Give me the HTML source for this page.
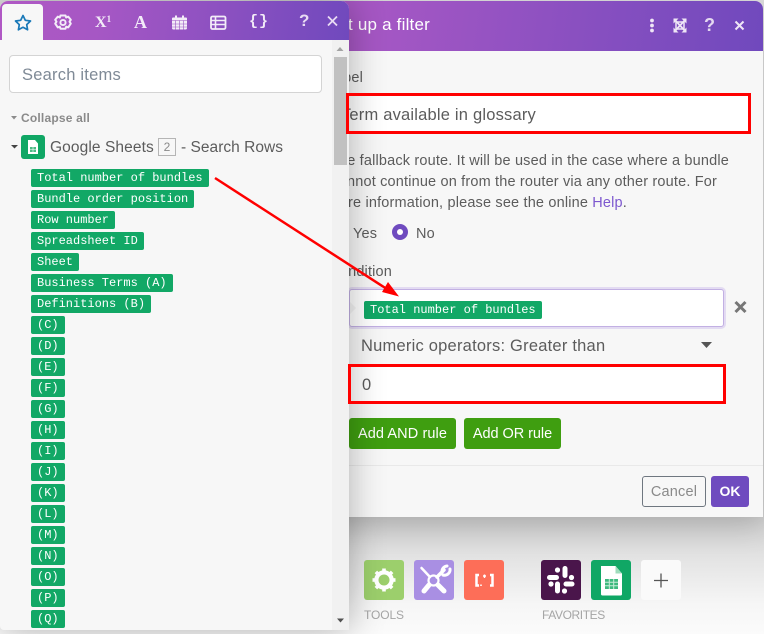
<!DOCTYPE html>
<html><head><meta charset="utf-8">
<style>
html,body{margin:0;padding:0;width:764px;height:634px;overflow:hidden}
body{position:relative;font-family:"Liberation Sans",sans-serif;color:#5c5c5c;background:linear-gradient(180deg,#ddd 0,#d0d0d0 517px,#e4e4e4 560px,#f6f6f6 605px,#fbfbfb 634px)}
.a{position:absolute;white-space:nowrap}
#dlg{left:250px;top:1px;width:513px;height:516px;background:#f7f7f7;border-radius:8px 8px 0 0;box-shadow:0 8px 30px rgba(0,0,0,.18);overflow:hidden}
#dh{left:0;top:0;width:513px;height:50px;background:linear-gradient(98deg,#b058c4 0,#a557c4 25%,#7049bd 100%)}
#panel{left:0;top:1px;width:349px;height:629px;background:#f7f7f7;border-radius:8px 8px 4px 4px;box-shadow:0 0 36px rgba(0,0,0,.3);overflow:hidden}
#ph{left:0;top:0;width:349px;height:39px;background:linear-gradient(98deg,#b058c4 0,#a557c4 30%,#7049bd 100%)}
#tab{left:2px;top:3px;width:41px;height:36px;background:#f7f7f7;border-radius:4px 4px 0 0}
.chip{position:absolute;left:31px;height:18px;padding:0 6px;background:#12a866;color:#fff;border-radius:2px;font:12px/19px "Liberation Mono",monospace;white-space:pre}
.inp{position:absolute;background:#fff;box-sizing:border-box}
.btn{position:absolute;box-sizing:border-box;text-align:center;border-radius:3px;font-size:14.5px;line-height:32px;height:31px;top:418px;background:#3f9e10;color:#fff}
svg{position:absolute;overflow:visible}
</style></head><body>

<!-- bottom toolbar -->
<div class="a" style="left:364px;top:560px;width:40px;height:40px;background:#9ccf6c;border-radius:3px"></div>
<div class="a" style="left:414px;top:560px;width:40px;height:40px;background:#a98fe3;border-radius:3px"></div>
<div class="a" style="left:464px;top:560px;width:40px;height:40px;background:#fd6e58;border-radius:3px"></div>
<div class="a" style="left:541px;top:560px;width:40px;height:40px;background:#4a154b;border-radius:3px"></div>
<div class="a" style="left:591px;top:560px;width:40px;height:40px;background:#10a765;border-radius:3px"></div>
<div class="a" style="left:641px;top:560px;width:40px;height:40px;background:#fafafa;border-radius:3px"></div>

<svg style="left:0;top:0" width="764" height="634" viewBox="0 0 764 634">
 <!-- gear -->
 <g transform="translate(384,580)" fill="#fff">
  <circle r="7.5" fill="none" stroke="#fff" stroke-width="4.5"/>
  <rect x="-1.800" y="-11.500" width="3.600" height="23"/><rect x="-1.800" y="-11.500" width="3.600" height="23" transform="rotate(45)"/><rect x="-1.800" y="-11.500" width="3.600" height="23" transform="rotate(90)"/><rect x="-1.800" y="-11.500" width="3.600" height="23" transform="rotate(135)"/>
  <circle r="5.500" fill="#9ccf6c"/>
 </g>
 <!-- tools -->
 <g fill="none" stroke="#fff" stroke-linecap="round">
  <circle cx="433.500" cy="580.500" r="5" stroke-width="2.200"/>
  <path d="M421.500 568L430 577" stroke-width="2.500"/>
  <path d="M438 585L444 591" stroke-width="5"/>
  <path d="M429 585L424 591" stroke-width="5"/>
  <path d="M437 577L444 570" stroke-width="3.500"/>
  <path d="M450 569a5.500 5.500 0 0 1-7 6M442 571a5.500 5.500 0 0 1 5-5" stroke-width="3"/>
 </g>
 <!-- function -->
 <g fill="none" stroke="#fff" stroke-width="2.500">
  <path d="M479 575h-2.500v10.500h2.500M490 575h2.500v10.500h-2.500"/>
  <path d="M484.500 574.500v3.500M483 576h3" stroke-width="1.400"/>
  <path d="M481 584.500v1.500" stroke-width="1.600"/>
 </g>
 <!-- slack -->
 <g stroke="#fff" stroke-width="5" stroke-linecap="round" fill="none">
  <path d="M549.500 577.500h7"/><path d="M565 568.500v7"/><path d="M566 584h6"/><path d="M557.500 584v7"/>
 </g>
 <g fill="#fff"><circle cx="557.500" cy="570" r="2.600"/><circle cx="571.500" cy="577.500" r="2.600"/><circle cx="564.500" cy="591" r="2.600"/><circle cx="551" cy="584" r="2.600"/></g>
 <!-- sheet -->
 <path d="M601 566h14.500l6.500 7.500V594a1.500 1.500 0 0 1-1.500 1.500h-18a1.500 1.500 0 0 1-1.500-1.500z" fill="#fff"/>
 <path d="M615.500 566l6.500 7.500h-6.500z" fill="#9fdcbc"/>
 <rect x="605" y="579" width="13" height="10" fill="#3db97e"/>
 <path d="M605 582.300h13M605 585.700h13M609.300 579v10M613.700 579v10" stroke="#c8ecd9" stroke-width="1"/>
 <!-- plus -->
 <path d="M661 573.500v14M654 580.500h14" stroke="#555" stroke-width="1.300"/>
</svg>
<div class="a" style="left:364px;top:608px;font-size:12px;line-height:14px;color:#a5a5a5;letter-spacing:-.1px">TOOLS</div>
<div class="a" style="left:542px;top:608px;font-size:12px;line-height:14px;color:#a5a5a5;letter-spacing:-.4px">FAVORITES</div>

<!-- dialog -->
<div id="dlg" class="a"><div id="dh" class="a"></div></div>
<div class="a" style="right:334px;top:15px;font-size:17px;line-height:20px;color:#fff;letter-spacing:.2px">Set up a filter</div>
<svg style="left:0;top:0" width="764" height="60">
 <g fill="#efe6f6"><circle cx="652" cy="20.500" r="1.900"/><circle cx="652" cy="25.500" r="1.900"/><circle cx="652" cy="30.500" r="1.900"/></g>
 <rect x="676" y="22" width="8" height="7" fill="none" stroke="#efe6f6" stroke-width="1.500"/>
 <path d="M674 19l12 13M686 19l-12 13" stroke="#efe6f6" stroke-width="1.800" fill="none"/>
 <path d="M673.500 18.500h5l-5 5zM686.500 18.500h-5l5 5zM673.500 32.500h5l-5-5zM686.500 32.500h-5l5-5z" fill="#efe6f6"/>
 <path d="M735.500 21.500l8 8M743.500 21.500l-8 8" stroke="#efe6f6" stroke-width="2" fill="none"/>
</svg>
<div class="a" style="left:704px;top:15px;font-size:18px;font-weight:bold;line-height:20px;color:#e4d8f0">?</div>

<div class="a" style="right:401px;top:70px;font-size:14.5px;line-height:16px;letter-spacing:.17px">Label</div>
<div class="inp" style="left:346px;top:93px;width:405px;height:41px;border:3px solid #f00"></div>
<div class="a" style="right:228px;top:106px;font-size:16.5px;line-height:19px;letter-spacing:.2px">Term available in glossary</div>

<div class="a" style="right:35px;top:153px;font-size:14.5px;line-height:17px;letter-spacing:.17px">The fallback route. It will be used in the case where a bundle</div>
<div class="a" style="right:47px;top:174px;font-size:14.5px;line-height:17px;letter-spacing:.17px">cannot continue on from the router via any other route. For</div>
<div class="a" style="right:137px;top:195px;font-size:14.5px;line-height:17px;letter-spacing:.17px">more information, please see the online <span style="color:#7d58cf">Help</span>.</div>

<div class="a" style="left:353px;top:226px;font-size:14.5px;line-height:17px;letter-spacing:.17px">Yes</div>
<div class="a" style="left:392px;top:224px;width:16px;height:16px;border-radius:50%;background:#6f4bbf"></div>
<div class="a" style="left:397px;top:229px;width:6px;height:6px;border-radius:50%;background:#fff"></div>
<div class="a" style="left:416px;top:226px;font-size:14.5px;line-height:17px;letter-spacing:.17px">No</div>

<div class="a" style="right:372px;top:264px;font-size:14.5px;line-height:16px;letter-spacing:.17px">Condition</div>
<div class="inp" style="left:349px;top:289px;width:375px;height:38px;border:1px solid #c2b0e3;box-shadow:0 0 0 2px #e3dbf2;border-radius:3px"></div>
<div class="a" style="left:350px;top:302px;width:0;height:0;border-left:6px solid #f4f4f4;border-top:6px solid transparent;border-bottom:6px solid transparent"></div>
<div class="chip" style="left:364px;top:301px">Total number of bundles</div>
<svg style="left:0;top:0" width="764" height="634">
 <path d="M735.500 302l10 10M745.500 302l-10 10" stroke="#777" stroke-width="3" fill="none"/>
 <path d="M701 342h11l-5.500 6z" fill="#555"/>
</svg>
<div class="a" style="left:361px;top:337px;font-size:16.5px;line-height:19px;letter-spacing:.22px">Numeric operators: Greater than</div>
<div class="inp" style="left:348px;top:364px;width:378px;height:40px;border:3px solid #f00"></div>
<div class="a" style="left:362px;top:376px;font-size:16.5px;line-height:19px">0</div>
<div class="btn" style="left:349px;width:107px;letter-spacing:.1px">Add AND rule</div>
<div class="btn" style="left:464px;width:97px;letter-spacing:-.05px">Add OR rule</div>
<div class="a" style="left:349px;top:465px;width:414px;height:1px;background:#e9e9e9"></div>
<div class="btn" style="left:642px;top:476px;width:64px;background:#f7f7f7;border:1px solid #6f7780;color:#8a8a8a;line-height:31px;letter-spacing:.2px">Cancel</div>
<div class="btn" style="left:711px;top:476px;width:38px;background:#6f4bbf;font-weight:bold;font-size:14px;line-height:31px">OK</div>

<!-- left panel -->
<div id="panel" class="a">
 <div id="ph" class="a"></div>
 <div id="tab" class="a"></div>
</div>
<svg style="left:0;top:0" width="349" height="60">
 <path d="M23 15.500l2.300 4.800 5.200.7-3.800 3.600.9 5.200-4.600-2.500-4.600 2.500.9-5.200-3.800-3.600 5.200-.7z" fill="none" stroke="#1a79b8" stroke-width="1.700" stroke-linejoin="round"/>
 <!-- gear -->
 <g fill="none" stroke="#f3ecf8">
  <path d="M60.500 15.500h5l.7 2 2-.9 2.600 3.200-1.300 1.900 1.300 1.900-2.600 3.800-2-.7-.7 2h-5l-.7-2-2 .7-2.600-3.800 1.300-1.900-1.300-1.900 2.600-3.200 2 .9z" stroke-width="2" stroke-linejoin="round"/>
  <circle cx="63" cy="22.500" r="2.600" stroke-width="1.900"/>
 </g>
 <!-- calendar -->
 <path d="M173 17.500h13a1 1 0 0 1 1 1V28a1.500 1.500 0 0 1-1.500 1.500h-12A1.500 1.500 0 0 1 172 28V18.500a1 1 0 0 1 1-1z" fill="#f3ecf8"/>
 <path d="M176 15.500v3M183 15.500v3" stroke="#f3ecf8" stroke-width="2"/>
 <path d="M172 20.500h15M175.500 20.500v9M179.500 20.500v9M183.500 20.500v9M172 24h15M172 27h15" stroke="#9a55c2" stroke-width=".6"/>
 <!-- table -->
 <rect x="211" y="16.500" width="14.500" height="12.500" rx="1.500" fill="none" stroke="#f3ecf8" stroke-width="1.800"/>
 <path d="M211 20.500h14.500M211 24.500h14.500M215.500 17v12" stroke="#f3ecf8" stroke-width="1.600"/>
 <!-- close -->
 <path d="M328 16.500l9 9M337 16.500l-9 9" stroke="#e9dcf3" stroke-width="1.800" fill="none"/>
</svg>
<div class="a" style="left:95px;top:13px;font:bold 16px/20px 'Liberation Serif',serif;color:#f3ecf8">X<span style="font-size:9px;position:relative;top:-5px;left:0">1</span></div>
<div class="a" style="left:134px;top:12px;font:bold 18px/20px 'Liberation Serif',serif;color:#f3ecf8">A</div>
<div class="a" style="left:249px;top:12px;font:bold 15px/20px 'Liberation Mono',monospace;color:#f3ecf8;letter-spacing:1px">{}</div>
<div class="a" style="left:299px;top:11px;font-size:17px;font-weight:bold;line-height:20px;color:#e9dcf3">?</div>

<div class="inp" style="left:9px;top:55px;width:313px;height:38px;border:1px solid #d4d4d4;border-radius:4px"></div>
<div class="a" style="left:22px;top:66px;font-size:16.5px;line-height:19px;color:#7f8a96;letter-spacing:.22px">Search items</div>

<svg style="left:0;top:0" width="349" height="634">
 <path d="M11 116h6l-3 3.500z" fill="#8c8c8c"/>
 <path d="M11 145h7l-3.500 3.500z" fill="#444"/>
 <rect x="21" y="135" width="24" height="24" rx="3" fill="#10a765"/>
 <path d="M28 140h7l3 3.500V154h-10z" fill="#fff"/>
 <rect x="30" y="147" width="6" height="5" fill="#4dbb85"/>
 <path d="M30 149.500h6M33 147v5" stroke="#fff" stroke-width=".6"/>
 <!-- scrollbar -->
 <rect x="332" y="40" width="17" height="590" fill="#f1f1f1"/>
 <rect x="334" y="57" width="13" height="108" fill="#c1c1c1"/>
 <path d="M336.500 51l3.500-4 3.500 4z" fill="#a3a3a3"/>
 <path d="M337 618.500h7l-3.500 4z" fill="#505050"/>
</svg>
<div class="a" style="left:21px;top:111px;font-size:12px;font-weight:bold;line-height:15px;color:#8a8a8a;letter-spacing:.2px">Collapse all</div>
<div class="a" style="left:50px;top:139px;font-size:15.500px;line-height:18px;letter-spacing:.1px">Google Sheets</div>
<div class="a" style="left:158px;top:138px;width:18px;height:18px;box-sizing:border-box;border:1px solid #b5b5b5;text-align:center;font-size:12px;line-height:16px;color:#8a8a8a">2</div>
<div class="a" style="left:181px;top:139px;font-size:15.500px;line-height:18px;letter-spacing:.03px">- Search Rows</div>

<div class="chip" style="top:169px">Total number of bundles</div>
<div class="chip" style="top:190px">Bundle order position</div>
<div class="chip" style="top:211px">Row number</div>
<div class="chip" style="top:232px">Spreadsheet ID</div>
<div class="chip" style="top:253px">Sheet</div>
<div class="chip" style="top:274px">Business Terms (A)</div>
<div class="chip" style="top:295px">Definitions (B)</div>
<div class="chip" style="top:316px">(C)</div>
<div class="chip" style="top:337px">(D)</div>
<div class="chip" style="top:358px">(E)</div>
<div class="chip" style="top:379px">(F)</div>
<div class="chip" style="top:400px">(G)</div>
<div class="chip" style="top:421px">(H)</div>
<div class="chip" style="top:442px">(I)</div>
<div class="chip" style="top:463px">(J)</div>
<div class="chip" style="top:484px">(K)</div>
<div class="chip" style="top:505px">(L)</div>
<div class="chip" style="top:526px">(M)</div>
<div class="chip" style="top:547px">(N)</div>
<div class="chip" style="top:568px">(O)</div>
<div class="chip" style="top:589px">(P)</div>
<div class="chip" style="top:610px">(Q)</div>

<!-- annotation boxes + arrow -->
<div class="a" style="left:346px;top:93px;width:405px;height:41px;box-sizing:border-box;border:3px solid #f00"></div>
<div class="a" style="left:348px;top:364px;width:378px;height:40px;box-sizing:border-box;border:3px solid #f00"></div>
<svg style="left:0;top:0" width="764" height="634">
 <path d="M215 178L390 291" stroke="#f00" stroke-width="2.500"/>
 <path d="M399 296.500L382 292l6-10z" fill="#f00"/>
</svg>
</body></html>
